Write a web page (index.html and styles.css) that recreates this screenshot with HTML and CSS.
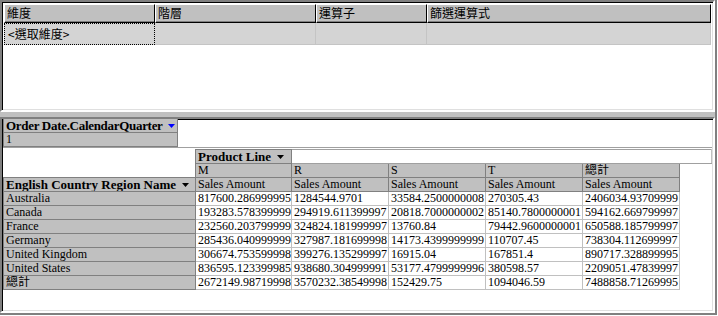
FILE: index.html
```html
<!DOCTYPE html>
<html lang="zh-Hant">
<head>
    <meta charset="UTF-8">
    <title>篩選</title>
    <link rel="stylesheet" href="styles.css">
</head>
<body>

<div class="window">
    <div class="main">
        <!-- panel de filtros -->
        <div class="filter-panel">
            <table class="filter-grid">
                <colgroup>
                    <col style="width:151px">
                    <col style="width:161px">
                    <col style="width:111px">
                    <col>
                </colgroup>
                <tr>
                    <th>維度</th>
                    <th>階層</th>
                    <th>運算子</th>
                    <th>篩選運算式</th>
                </tr>
                <tr>
                    <td class="focus">&lt;選取維度&gt;</td>
                    <td></td>
                    <td></td>
                    <td></td>
                </tr>
            </table>
        </div>

        <div class="splitter"></div>

        <!-- tabla dinámica -->
        <div class="pivot-panel">
            <div class="slicer">
                <table class="slicer-grid">
                    <tr><td class="hdr bold slicer-name">Order Date.CalendarQuarter <svg class="arrow" width="7" height="4" viewBox="0 0 7 4"><polygon points="0,0 7,0 3.5,4" fill="#0000ff"/></svg></td></tr>
                    <tr><td class="hdr">1</td></tr>
                </table>
            </div>

            <table class="pivot">
                <colgroup>
                    <col style="width:192px">
                    <col style="width:96px">
                    <col style="width:97px">
                    <col style="width:97px">
                    <col style="width:97px">
                    <col style="width:97px">
                    <col>
                </colgroup>
                <tbody id="pivot-body">
                    <tr>
                        <td class="blank" rowspan="2"></td>
                        <td class="hdr bold">Product Line <svg class="arrow" width="7" height="4" viewBox="0 0 7 4"><polygon points="0,0 7,0 3.5,4" fill="#000"/></svg></td>
                        <td class="fill-line" colspan="5"></td>
                    </tr>
                    <tr>
                        <td class="hdr">M</td>
                        <td class="hdr">R</td>
                        <td class="hdr">S</td>
                        <td class="hdr">T</td>
                        <td class="hdr">總計</td>
                        <td class="blank"></td>
                    </tr>
                    <tr>
                        <td class="hdr bold">English Country Region Name <svg class="arrow" width="7" height="4" viewBox="0 0 7 4"><polygon points="0,0 7,0 3.5,4" fill="#000"/></svg></td>
                        <td class="hdr measure">Sales Amount</td>
                        <td class="hdr measure">Sales Amount</td>
                        <td class="hdr measure">Sales Amount</td>
                        <td class="hdr measure">Sales Amount</td>
                        <td class="hdr measure">Sales Amount</td>
                        <td class="blank"></td>
                    </tr>
                    <tr><td class="hdr">Australia</td><td>817600.286999995</td><td>1284544.9701</td><td>33584.2500000008</td><td>270305.43</td><td>2406034.93709999</td><td class="blank"></td></tr>
                    <tr><td class="hdr">Canada</td><td>193283.578399999</td><td>294919.611399997</td><td>20818.7000000002</td><td>85140.7800000001</td><td>594162.669799997</td><td class="blank"></td></tr>
                    <tr><td class="hdr">France</td><td>232560.203799999</td><td>324824.181999997</td><td>13760.84</td><td>79442.9600000001</td><td>650588.185799997</td><td class="blank"></td></tr>
                    <tr><td class="hdr">Germany</td><td>285436.040999999</td><td>327987.181699998</td><td>14173.4399999999</td><td>110707.45</td><td>738304.112699997</td><td class="blank"></td></tr>
                    <tr><td class="hdr">United Kingdom</td><td>306674.753599998</td><td>399276.135299997</td><td>16915.04</td><td>167851.4</td><td>890717.328899995</td><td class="blank"></td></tr>
                    <tr><td class="hdr">United States</td><td>836595.123399985</td><td>938680.304999991</td><td>53177.4799999996</td><td>380598.57</td><td>2209051.47839997</td><td class="blank"></td></tr>
                    <tr><td class="hdr">總計</td><td>2672149.98719998</td><td>3570232.38549998</td><td>152429.75</td><td>1094046.59</td><td>7488858.71269995</td><td class="blank"></td></tr>
                </tbody>
            </table>
        </div>
    </div>
</div>

</body>
</html>
```

FILE: styles.css
```css
/* ventana general */
html, body {
    margin: 0;
    padding: 0;
}
body {
    width: 718px;
    height: 316px;
    background-color: #c0c0c0;
    font-family: "Liberation Serif", "Noto Sans CJK TC", serif;
    font-size: 12px;
    color: #000;
    overflow: hidden;
}
.window {
    width: 718px;
    height: 316px;
    box-sizing: border-box;
    border-right: 1px solid #fff;
    border-bottom: 1px solid #fff;
    padding: 0 2px 2px 0;
    box-shadow: inset -2px -2px 0 #808080;
}
.main {
    display: flex;
    flex-direction: column;
    height: 100%;
    width: 100%;
}

/* panel de filtros */
.filter-panel {
    height: 112px;
    box-sizing: border-box;
    background-color: #fff;
    border: 2px solid;
    border-color: #808080 #fff #fff #808080;
    box-shadow: inset 1px 1px 0 #000, inset -1px -1px 0 #dfdfdf;
    padding: 2px 2px 0 2px;
}
.filter-grid {
    border-collapse: separate;
    border-spacing: 0;
    table-layout: fixed;
    width: 707px;
    font-family: "Noto Sans CJK TC", "Liberation Sans", sans-serif;
    font-size: 12px;
}
.filter-grid th {
    height: 19px;
    box-sizing: border-box;
    padding: 0 2px 1px 2px;
    text-align: left;
    font-weight: normal;
    background-color: #c0c0c0;
    border-top: 1px solid #fff;
    border-left: 1px solid #fff;
    border-right: 1px solid #000;
    border-bottom: 1px solid #000;
    box-shadow: inset 0 -1px 0 #808080;
    line-height: 16px;
}
.filter-grid td {
    height: 22px;
    box-sizing: border-box;
    padding: 0 3px;
    background-color: #d4d4d4;
    border-right: 1px solid #c4c4c4;
    border-bottom: 1px solid #c4c4c4;
    line-height: 20px;
}
.filter-grid td.focus {
    border: 1px dotted #000;
}

.splitter {
    height: 5px;
    flex: none;
}

/* tabla dinámica */
.pivot-panel {
    flex: 1;
    box-sizing: border-box;
    background-color: #fff;
    border: 2px solid;
    border-color: #808080 #fff #fff #808080;
    box-shadow: inset 1px 1px 0 #000, inset -1px -1px 0 #dfdfdf;
    padding: 0 1px;
}
.slicer {
    border-bottom: 1px solid #a0a0a0;
    margin-top: -1px;
}
.slicer-grid {
    border-collapse: collapse;
}
td {
    padding: 0 2px;
    height: 13px;
    line-height: 13px;
    white-space: nowrap;
    overflow: hidden;
    vertical-align: middle;
}
.slicer-grid td {
    width: 169px;
}
td.hdr {
    background-color: #c0c0c0;
    border: 1px solid #808080;
}
td.bold {
    font-weight: bold;
    font-size: 13px;
}
td.slicer-name {
    letter-spacing: -0.3px;
}
td.measure {
    border-top-color: #fff;
}
.arrow {
    margin-left: 3px;
    vertical-align: 2px;
}
.pivot {
    border-collapse: collapse;
    table-layout: fixed;
    width: 100%;
    margin-top: 1px;
}
.pivot td {
    border: 1px solid #c0c0c0;
}
.pivot td.hdr {
    border-color: #808080;
}
.pivot td.blank {
    border: none;
}
.pivot td.fill-line {
    border-top: 1px solid #a0a0a0;
    border-bottom: 1px solid #a0a0a0;
}
```
